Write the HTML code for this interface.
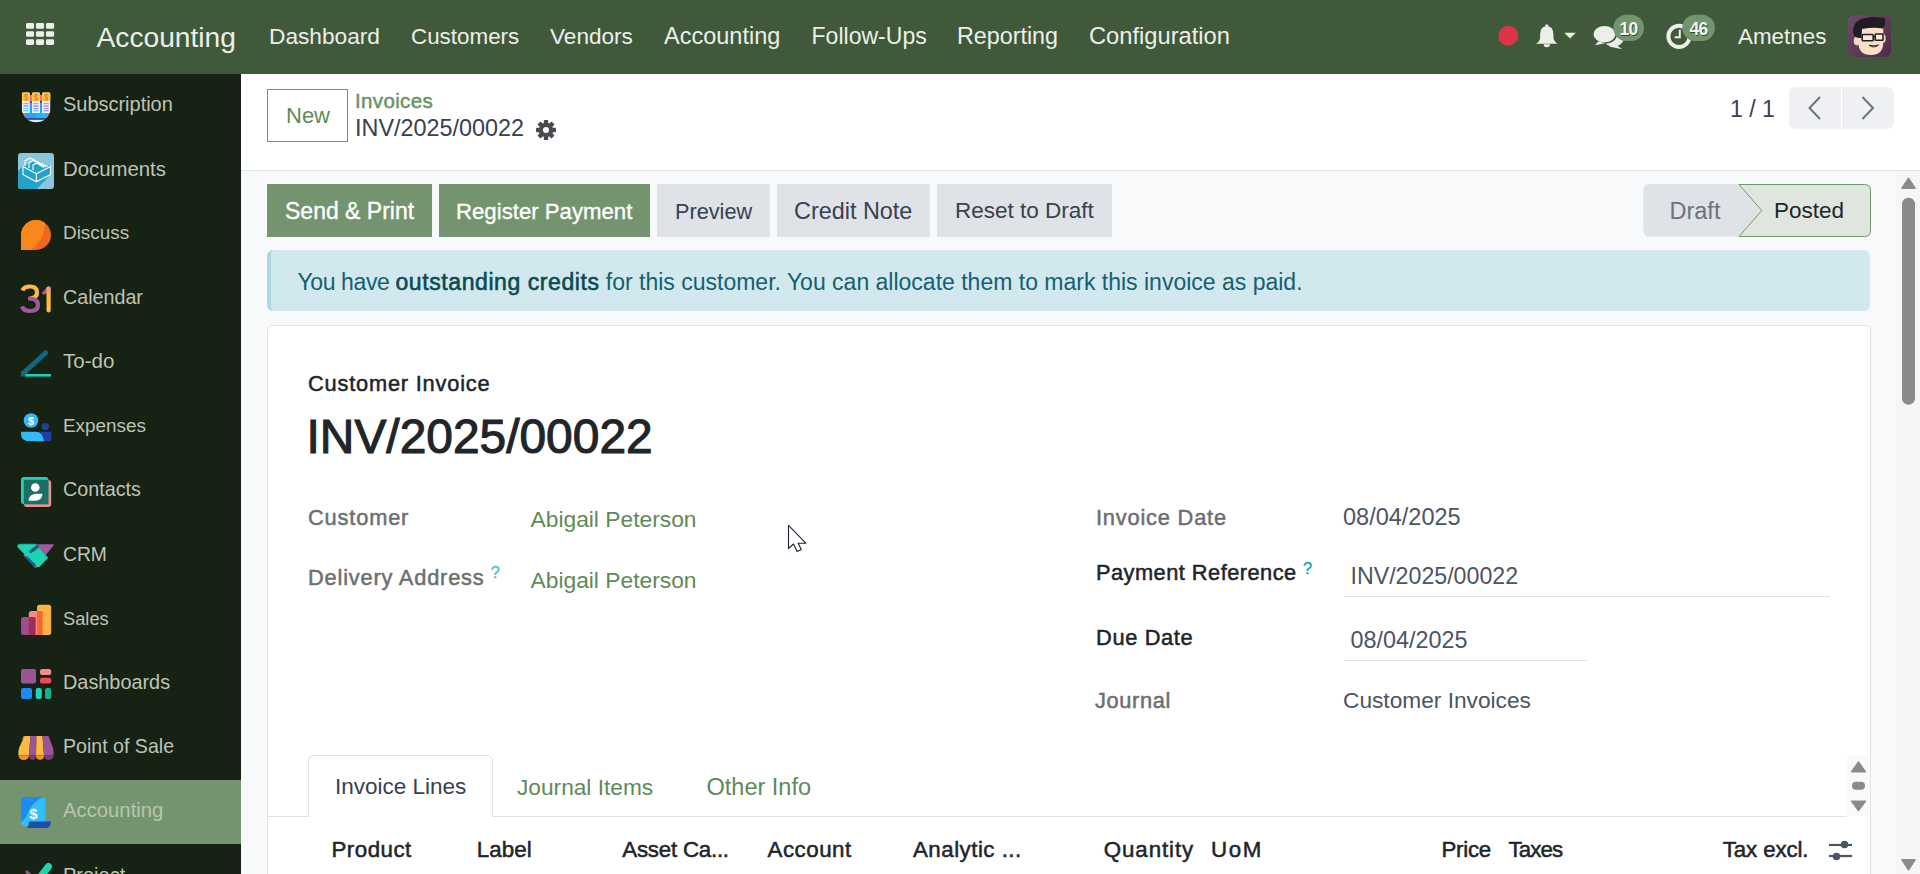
<!DOCTYPE html>
<html><head><meta charset="utf-8">
<style>
*{box-sizing:border-box;margin:0;padding:0}
html,body{width:1920px;height:874px;overflow:hidden;background:#f8f9fa;font-family:"Liberation Sans",sans-serif}
.a{position:absolute;white-space:nowrap;line-height:1}
.sb{-webkit-text-stroke:0.5px currentColor}
#nav{position:absolute;left:0;top:0;width:1920px;height:74px;background:#41593b}
#nav .t{color:#ecefe9;font-size:23px;top:25px}
#side{position:absolute;left:0;top:74px;width:241px;height:800px;background:#162214;overflow:hidden}
.si{position:absolute;left:0;width:241px;height:64px}
.st{position:absolute;left:63px;color:#bfc3b4;font-size:20px;line-height:1;white-space:nowrap}
.si svg{position:absolute}
#cp{position:absolute;left:241px;top:74px;width:1679px;height:97px;background:#fff;border-bottom:1px solid #dee2e6}
.btn{position:absolute;top:184px;height:53px;background:#dfe2e6}
.btn.p{background:#73946e}
.btn .t{position:absolute;top:16px;font-size:23px;line-height:1;color:#374151;white-space:nowrap}
.btn.p .t{color:#fff;-webkit-text-stroke:0.35px #fff}
</style></head>
<body>
<div id="nav">
  <svg class="a" style="left:0;top:0" width="60" height="60" viewBox="0 0 60 60"><g fill="#ecefe9"><rect x="26" y="23.10" width="8.1" height="5.7" rx="1.3"/><rect x="36" y="23.10" width="8.1" height="5.7" rx="1.3"/><rect x="46" y="23.10" width="8.1" height="5.7" rx="1.3"/><rect x="26" y="31.15" width="8.1" height="5.7" rx="1.3"/><rect x="36" y="31.15" width="8.1" height="5.7" rx="1.3"/><rect x="46" y="31.15" width="8.1" height="5.7" rx="1.3"/><rect x="26" y="39.20" width="8.1" height="5.7" rx="1.3"/><rect x="36" y="39.20" width="8.1" height="5.7" rx="1.3"/><rect x="46" y="39.20" width="8.1" height="5.7" rx="1.3"/></g></svg>
  <div class="a t" style="left:96.5px;top:23px;font-size:28.2px">Accounting</div>
  <div class="a t" style="left:269px;font-size:22.7px;top:25.4px">Dashboard</div>
  <div class="a t" style="left:411px;font-size:22.4px;top:25.5px">Customers</div>
  <div class="a t" style="left:550px;font-size:22.6px;top:25.8px">Vendors</div>
  <div class="a t" style="left:664px;font-size:23.5px;top:24.71px">Accounting</div>
  <div class="a t" style="left:811.5px;font-size:23.05px;top:25.1px">Follow-Ups</div>
  <div class="a t" style="left:957px;font-size:23.3px;top:24.9px">Reporting</div>
  <div class="a t" style="left:1089px;font-size:23.7px;top:24.6px">Configuration</div>
  <div class="a t" style="left:1738px;font-size:22.4px;top:25.7px">Ametnes</div>
</div>
<div id="side">
<div style="position:absolute;left:0;top:706px;width:241px;height:64px;background:#74946f"></div>
<div class="st" style="top:21.10px;font-size:19.97px">Subscription</div>
<div class="st" style="top:84.92px;font-size:20.35px">Documents</div>
<div class="st" style="top:150.30px;font-size:18.9px">Discuss</div>
<div class="st" style="top:213.77px;font-size:19.7px">Calendar</div>
<div class="st" style="top:277.25px;font-size:20.5px">To-do</div>
<div class="st" style="top:342.75px;font-size:18.9px">Expenses</div>
<div class="st" style="top:406.17px;font-size:19.76px">Contacts</div>
<div class="st" style="top:470.71px;font-size:19.3px">CRM</div>
<div class="st" style="top:535.71px;font-size:18.3px">Sales</div>
<div class="st" style="top:598.52px;font-size:19.88px">Dashboards</div>
<div class="st" style="top:662.92px;font-size:19.59px">Point of Sale</div>
<div class="st" style="top:726.47px;font-size:20.3px;color:#b5c6b0">Accounting</div>
<div class="st" style="top:790.87px;font-size:20px">Project</div>
<svg style="position:absolute;left:0;top:-74px" width="241" height="874" viewBox="0 0 241 874">
<defs>
 <clipPath id="shield"><path d="M21.5,92 H50.8 V107.5 A14.65,14.8 0 0 1 21.5,107.5 Z"/></clipPath>
 <clipPath id="disc"><path d="M21,250 V235 A15,15 0 1 1 36,250 Z"/></clipPath>
 <clipPath id="doc"><rect x="18" y="153" width="36" height="36" rx="3"/></clipPath>
</defs>
<!-- Subscription -->
<g clip-path="url(#shield)">
 <rect x="29.9" y="95" width="2" height="6" fill="#f36aa7"/><rect x="40" y="95" width="2" height="6" fill="#f36aa7"/>
 <rect x="29.9" y="101" width="2" height="2" fill="#5b3d8c"/><rect x="40" y="101" width="2" height="2" fill="#5b3d8c"/>
 <rect x="29.9" y="103" width="2" height="10" fill="#24a6f5"/><rect x="40" y="103" width="2" height="10" fill="#24a6f5"/>
 <rect x="20" y="113" width="32" height="5.2" fill="#e46aa8"/>
 <rect x="25.5" y="113" width="21" height="5.2" fill="#22a8f8"/>
 <rect x="36" y="113" width="10.5" height="5.2" fill="#12c0fb"/>
 <rect x="20" y="118.2" width="32" height="1.6" fill="#5b3a8e"/>
 <rect x="20" y="119.8" width="32" height="3" fill="#c6f3fc"/>
 <path d="M21.9,113 V94 Q21.9,92.6 23.3,92.6 H28.5 Q29.9,92.6 29.9,94 V113 Z" fill="#edf2f8"/>
 <path d="M31.9,113 V94 Q31.9,92.6 33.3,92.6 H38.6 Q40,92.6 40,94 V113 Z" fill="#edf2f8"/>
 <path d="M42,113 V94 Q42,92.6 43.4,92.6 H48.9 Q50.3,92.6 50.3,94 V113 Z" fill="#edf2f8"/>
 <path d="M21.9,101 V94 Q21.9,92.6 23.3,92.6 H28.5 Q29.9,92.6 29.9,94 V101 Z" fill="#fcc43a"/>
 <path d="M31.9,101 V94 Q31.9,92.6 33.3,92.6 H38.6 Q40,92.6 40,94 V101 Z" fill="#fcc43a"/>
 <path d="M42,101 V94 Q42,92.6 43.4,92.6 H48.9 Q50.3,92.6 50.3,94 V101 Z" fill="#fcc43a"/>
 <g fill="#b18ce9"><rect x="23.3" y="103.1" width="5.2" height="1.1"/><rect x="33.3" y="103.1" width="5.2" height="1.1"/><rect x="43.5" y="103.1" width="5.2" height="1.1"/>
 <rect x="23.3" y="105.3" width="5.2" height="1.5"/><rect x="33.3" y="105.3" width="5.2" height="1.5"/><rect x="43.5" y="105.3" width="5.2" height="1.5"/>
 <rect x="33.3" y="108" width="5.2" height="1.1"/><rect x="43.5" y="108" width="5.2" height="1.1"/><rect x="43.5" y="110" width="5.2" height="1.3"/></g>
 <g fill="#5fd3f5"><rect x="23.3" y="108" width="5.2" height="1.1"/><rect x="23.3" y="110" width="5.2" height="1.3"/><rect x="33.3" y="110" width="5.2" height="1.3"/></g>
 <g fill="none" stroke="#f7702b" stroke-width="1.3"><path d="M27.5,94.8 Q24.3,94.5 25,96.6 Q27.8,97.5 27,99.4 Q25.8,100.2 24.3,99.5"/><path d="M37.5,94.8 Q34.3,94.5 35,96.6 Q37.8,97.5 37,99.4 Q35.8,100.2 34.3,99.5"/><path d="M47.7,94.8 Q44.5,94.5 45.2,96.6 Q48,97.5 47.2,99.4 Q46,100.2 44.5,99.5"/></g>
</g>
<!-- Documents -->
<g clip-path="url(#doc)">
 <rect x="18" y="153" width="36" height="36" fill="#8cc5dc"/>
 <path d="M18,171 L23,166 L50,175 L37,189 L18,189 Z" fill="#22a4c8"/>
 <path d="M23,166.5 L31,162 L36,160 L50.5,166.5 L50.5,174.5 L36.4,181.8 L23,174.5 Z" fill="#22a4c8"/>
 <g fill="none" stroke="#fff" stroke-width="1.1" stroke-linejoin="round">
  <path d="M23,166.5 L36.4,173.8 L50.5,166.5 L50.5,174.5 L36.4,181.8 L23,174.5 Z"/>
  <path d="M36.4,173.8 V181.8"/>
  <path d="M25,166 V161 L30,158 L48,166.5 M29,168 V163 L33,160.5 L46,167 M33,170 V165 L36.5,163 L44,167.5"/>
 </g>
</g>
<!-- Discuss -->
<g clip-path="url(#disc)">
 <rect x="20" y="219" width="32" height="32" fill="#f26522"/>
 <circle cx="12.2" cy="222.9" r="32.8" fill="#f8881b"/>
</g>
<!-- Calendar 31 -->
<g fill="none" stroke-width="4.2" stroke-linecap="butt">
 <path d="M22.5,290.5 Q24,286.5 30,286.5 Q37,286.5 37,292.5 Q37,298 30,298.5" stroke="#fbb945"/>
 <path d="M28,298.5 Q38,298.5 38,305 Q38,311 30,311 Q23.5,311 22,306.5" stroke="#9c5a9c"/>
</g>
<path d="M41.5,293 L47,287 L50,287 L50,291 L44,295 Z" fill="#9c5a9c"/>
<rect x="46.5" y="286.5" width="4.2" height="26" rx="2" fill="#fbb945"/>
<rect x="46.5" y="286.5" width="4.2" height="5" rx="2" fill="#f58aa0"/>
<!-- To-do -->
<path d="M23.5,373 L45.5,353" stroke="#0f6a80" stroke-width="5" stroke-linecap="round"/>
<path d="M21,371 L24,371 L27,374 L27,376.5 L21,376.5 Z" fill="#0f6a80"/>
<rect x="25.5" y="374" width="25.5" height="2.6" fill="#1ad0b5"/>
<!-- Expenses -->
<circle cx="31" cy="420.5" r="7.3" fill="#35b8f6"/>
<text x="31" y="424.8" font-family="Liberation Sans" font-weight="bold" font-size="11" fill="#fff" text-anchor="middle">$</text>
<circle cx="45.4" cy="426.6" r="3.7" fill="#1e40a0"/>
<rect x="36" y="431.8" width="15.5" height="9.4" rx="2" fill="#1e40a0"/>
<path d="M21,431.8 H36 Q42.5,432 44,441.2 H29 Q21,441.2 21,434 Z" fill="#33bbf8"/>
<!-- Contacts -->
<rect x="23.8" y="480" width="27.4" height="27" rx="3" fill="#f78c8c"/>
<rect x="21" y="477" width="27.5" height="27.3" rx="3" fill="#1bd1b8"/>
<rect x="23.8" y="479.8" width="24.7" height="24.5" fill="#1e6e63"/>
<circle cx="35.3" cy="487.5" r="4.3" fill="#fff"/>
<path d="M28.5,500.8 Q29,493.8 37,493.8 H42.5 Q42,500.8 35,500.8 Z" fill="#fff"/>
<!-- CRM -->
<path d="M35.7,544.2 H53 Q54.5,544.2 53.6,545.5 L45.8,555 Z" fill="#9d5b9e"/>
<path d="M23.5,555.5 L34.5,567.2 Q35.5,568.3 36.8,567.4 L38.5,565.5 L25,552 Z" fill="#9d5b9e"/>
<path d="M19.5,544.2 H35.7 L47.9,557.8 L39.5,566.5 Q38.3,567.6 37.2,566.5 L18.5,548 Q17.3,546.5 17.8,545.3 Q18.3,544.2 19.5,544.2 Z" fill="#1ed2b5" stroke="#1ed2b5" stroke-width="0.6" stroke-linejoin="round"/>
<path d="M30.9,551.5 L37.4,546.6" stroke="#10637a" stroke-width="3.3" stroke-linecap="round"/>
<path d="M26.6,557.6 L34.6,565.2" stroke="#10637a" stroke-width="2.6" stroke-linecap="round"/>
<!-- Sales -->
<rect x="37" y="604.8" width="14.2" height="30.2" rx="2.5" fill="#fbb345"/>
<rect x="28.8" y="611" width="13.8" height="24" rx="2.5" fill="#f88a8c"/>
<rect x="37" y="611" width="5.6" height="24" fill="#f36a2a"/>
<rect x="21" y="617" width="14.5" height="18" rx="2.5" fill="#9b4f8c"/>
<rect x="28.8" y="617" width="6.7" height="18" fill="#a02c5a"/>
<!-- Dashboards -->
<rect x="21" y="669" width="15" height="14.6" rx="2" fill="#9b5596"/>
<rect x="40" y="669" width="11.2" height="6" rx="2" fill="#f78b8b"/>
<rect x="40" y="677.8" width="11.2" height="5.8" rx="2" fill="#f04a57"/>
<rect x="21" y="688" width="11" height="11" rx="2" fill="#1a8cf3"/>
<rect x="35.7" y="688" width="6.1" height="11" rx="2" fill="#1ed3b4"/>
<rect x="45" y="688" width="6.2" height="11" rx="2" fill="#17b08f"/>
<!-- Point of Sale -->
<g>
 <path d="M24.5,736 H30.5 L29,755.5 H18.5 Q18,752 19,748 Z" fill="#fbb945"/>
 <path d="M30.5,736 H36.5 L36,755.5 H29 Z" fill="#9b5596"/>
 <path d="M36.5,736 H42.5 L44,755.5 H36 Z" fill="#fbb945"/>
 <path d="M42.5,736 H48.5 L53,748 Q54,752 53.5,755.5 H44 Z" fill="#9b5596"/>
 <path d="M24.5,736 Q23,736 22,740 L24,737 Z" fill="#fbb945"/>
 <path d="M18.5,755.5 H29 A5.25,4.5 0 0 1 18.5,755.5 Z" fill="#f7901e"/>
 <path d="M29,755.5 H36 A3.5,4.2 0 0 1 29,755.5 Z" fill="#7b3c78"/>
 <path d="M36,755.5 H44 A4,4.2 0 0 1 36,755.5 Z" fill="#f7901e"/>
 <path d="M44,755.5 H53.5 A4.75,4.5 0 0 1 44,755.5 Z" fill="#7b3c78"/>
</g>
<!-- Accounting -->
<rect x="21" y="797" width="24.5" height="29" rx="3" fill="#2fbffa"/>
<path d="M21,822 V800 Q21,797 24,797 H44 Q33,800 27,815 Q25,820 21,822 Z" fill="#1a8df0"/>
<path d="M29,821.5 H51 Q51,828 46,828 H27 Q29,826 29,821.5 Z" fill="#1f4cac"/>
<text x="33.5" y="819" font-family="Liberation Sans" font-weight="bold" font-size="15" fill="#fff" text-anchor="middle">$</text>
<!-- Project -->
<path d="M39.5,878 L48.5,866.5" stroke="#1ed3b4" stroke-width="7" stroke-linecap="round"/>
<path d="M26,871 L30,875" stroke="#9b5596" stroke-width="3"/>
</svg>
</div>
<div id="cp"></div>
<div class="btn p" style="left:267px;width:165px"><div class="t" style="left:18px">Send &amp; Print</div></div>
<div class="btn p" style="left:439px;width:211px"><div class="t" style="left:17px;font-size:22.2px;top:16.6px">Register Payment</div></div>
<div class="btn" style="left:657px;width:113px"><div class="t" style="left:18px;font-size:21.7px;top:17px">Preview</div></div>
<div class="btn" style="left:777px;width:153px"><div class="t" style="left:17px;font-size:23.4px;top:15.7px">Credit Note</div></div>
<div class="btn" style="left:937px;width:175px"><div class="t" style="left:18px;font-size:22.5px;top:16.4px">Reset to Draft</div></div>

<!-- nav right -->
<svg class="a" style="left:1490px;top:10px" width="420" height="54" viewBox="1490 10 420 54">
 <circle cx="1508.3" cy="35.8" r="10" fill="#dc3545"/>
 <!-- bell -->
 <path d="M1546.8,26.3 C1541.5,26.3 1540.3,30 1540.2,35 L1540,39 Q1539,42.3 1536,43.8 L1557.6,43.8 Q1554.6,42.3 1553.6,39 L1553.4,35 C1553.3,30 1552.1,26.3 1546.8,26.3 Z" fill="#ecefe9"/>
 <circle cx="1546.8" cy="25.8" r="1.6" fill="#ecefe9"/>
 <path d="M1543.6,44.3 A3.2,3 0 0 0 1550,44.3 Z" fill="#ecefe9"/>
 <path d="M1564.3,32.8 H1575.8 L1570,38.5 Z" fill="#ecefe9"/>
 <!-- chat -->
 <ellipse cx="1613.5" cy="39" rx="10" ry="7.6" fill="#ecefe9"/>
 <path d="M1615,44 L1622.3,49.3 L1609,46.5 Z" fill="#ecefe9"/>
 <ellipse cx="1604.5" cy="34.2" rx="11.8" ry="9" fill="#ecefe9" stroke="#41593b" stroke-width="1.6"/>
 <path d="M1598.5,41.2 L1595,45.3 L1605,43.2 Z" fill="#ecefe9"/>
 <rect x="1613.4" y="14.7" width="30.6" height="26.3" rx="13.1" fill="#73946e"/>
 <text x="1629.3" y="35.8" font-family="Liberation Sans" font-weight="bold" font-size="17.5" fill="#2e4a2b" text-anchor="middle" letter-spacing="-0.6">10</text>
 <text x="1628.6" y="35" font-family="Liberation Sans" font-weight="bold" font-size="17.5" fill="#f2f4f0" text-anchor="middle" letter-spacing="-0.6">10</text>
 <!-- clock -->
 <circle cx="1679" cy="36.3" r="10.6" fill="none" stroke="#ecefe9" stroke-width="4"/>
 <path d="M1679.8,29.7 V37.3 H1674.7" fill="none" stroke="#ecefe9" stroke-width="2"/>
 <rect x="1682.3" y="14.7" width="32.6" height="26.3" rx="13.1" fill="#73946e"/>
 <text x="1699.3" y="35.8" font-family="Liberation Sans" font-weight="bold" font-size="17.5" fill="#2e4a2b" text-anchor="middle" letter-spacing="-0.6">46</text>
 <text x="1698.6" y="35" font-family="Liberation Sans" font-weight="bold" font-size="17.5" fill="#f2f4f0" text-anchor="middle" letter-spacing="-0.6">46</text>
</svg>
<div class="a" style="left:1848.3px;top:15px;width:42.6px;height:41.8px;border-radius:6px;background:linear-gradient(135deg,#6e4a6c,#4f2b46);overflow:hidden">
 <svg width="43" height="42" viewBox="0 0 43 42">
  <ellipse cx="8.8" cy="26" rx="3" ry="4.4" fill="#f5d6bd"/>
  <ellipse cx="35.5" cy="23.4" rx="2.2" ry="4.2" fill="#f2d2b8"/>
  <path d="M10.5,14 Q10.5,11 14,11 H32 Q35.3,11 35.3,16 V27 Q35.3,40 23,40 Q10.5,40 10.5,28 Z" fill="#f8dfc7"/>
  <path d="M5,17 Q5,5 17,3 Q27,1 33,3 Q37,1 37,5 Q38,10 34.5,13.5 Q26,12 14,14 L13.5,23 Q8,23 6.5,21 Z" fill="#1f1d22"/>
  <rect x="14.2" y="19.5" width="11" height="6.3" rx="0.8" fill="#fff" fill-opacity="0.35" stroke="#222" stroke-width="1.6"/>
  <rect x="27.2" y="19" width="7.8" height="6.3" rx="0.8" fill="#fff" fill-opacity="0.35" stroke="#222" stroke-width="1.6"/>
  <path d="M25.2,22 H27.2" stroke="#222" stroke-width="1.4"/>
  <path d="M21,30.2 Q26,33.8 30.5,30 Q26,31.5 21,30.2 Z" fill="#fff" stroke="#3a2a2a" stroke-width="1"/>
 </svg>
</div>
<!-- control panel content -->
<div class="a" style="left:267px;top:89px;width:81px;height:53px;border:1px solid #71946c;background:#fff"></div>
<div class="a" style="left:286px;top:105.4px;font-size:22px;color:#5f8a58">New</div>
<div class="a sb" style="left:355px;top:91.35px;font-size:20.5px;letter-spacing:0.36px;color:#6b9365">Invoices</div>
<div class="a" style="left:355px;top:117.2px;font-size:23.4px;color:#374151">INV/2025/00022</div>
<svg class="a" style="left:535px;top:119px" width="22" height="22" viewBox="-11 -11 22 22">
 <g fill="#464b52">
  <circle r="7.2"/>
  <g id="teeth"><rect x="-2.2" y="-10" width="4.4" height="5" rx="0.8"/></g>
  <use href="#teeth" transform="rotate(45)"/><use href="#teeth" transform="rotate(90)"/><use href="#teeth" transform="rotate(135)"/>
  <use href="#teeth" transform="rotate(180)"/><use href="#teeth" transform="rotate(225)"/><use href="#teeth" transform="rotate(270)"/><use href="#teeth" transform="rotate(315)"/>
 </g>
 <circle r="3" fill="#fff"/>
</svg>
<div class="a" style="left:1730px;top:97.9px;font-size:23px;color:#374151">1 / 1</div>
<div class="a" style="left:1789px;top:87px;width:52px;height:42px;background:#eef0f3;border-radius:7px 0 0 7px"></div>
<div class="a" style="left:1842px;top:87px;width:52px;height:42px;background:#eef0f3;border-radius:0 7px 7px 0"></div>
<svg class="a" style="left:1789px;top:87px" width="105" height="42" viewBox="0 0 105 42">
 <path d="M31,10 L20.5,21 L31,32" fill="none" stroke="#6b7280" stroke-width="2"/>
 <path d="M73.5,10 L84,21 L73.5,32" fill="none" stroke="#6b7280" stroke-width="2"/>
</svg>
<!-- statusbar -->
<svg class="a" style="left:1640px;top:180px" width="236" height="62" viewBox="1640 180 236 62">
 <path d="M1649.5,184 H1739 L1761.8,210.3 L1739,236.5 H1649.5 Q1643.5,236.5 1643.5,230.5 V190 Q1643.5,184 1649.5,184 Z" fill="#dfe2e6"/>
 <path d="M1739,184.5 H1864.5 Q1870.5,184.5 1870.5,190.5 V230.5 Q1870.5,236.5 1864.5,236.5 H1739 L1761.8,210.5 Z" fill="#dfe6de" stroke="#6f9a68" stroke-width="1"/>
</svg>
<div class="a" style="left:1669.5px;top:199.5px;font-size:23.5px;color:#6b7280">Draft</div>
<div class="a" style="left:1774px;top:199.5px;font-size:22.5px;color:#212529">Posted</div>
<!-- alert -->
<div class="a" style="left:267px;top:250px;width:1603px;height:61px;background:#d1e9ee;border-radius:6px;border-left:4px solid #a9d7e2"></div>
<div class="a" style="left:297.5px;top:270.8px;font-size:23px;letter-spacing:-0.4px;color:#146070">You have</div>
<div class="a" style="left:395.5px;top:270.8px;font-size:23px;color:#0c4a55;-webkit-text-stroke:0.6px #0c4a55;letter-spacing:0.58px">outstanding credits</div>
<div class="a" style="left:605.8px;top:270.8px;font-size:23px;color:#146070">for this customer. You can allocate them to mark this invoice as paid.</div>
<!-- sheet -->
<div class="a" style="left:267px;top:325px;width:1604px;height:560px;background:#fff;border:1px solid #e1e4e8;border-radius:5px"></div>
<div class="a sb" style="left:308px;top:372.55px;font-size:21.8px;letter-spacing:0.8px;color:#212529">Customer Invoice</div>
<div class="a" style="left:306.5px;top:412.9px;font-size:47.9px;color:#212529;-webkit-text-stroke:1.1px #212529">INV/2025/00022</div>
<div class="a sb" style="left:308px;top:506.75px;font-size:21.8px;letter-spacing:0.84px;color:#6c6f73">Customer</div>
<div class="a" style="left:530.5px;top:507.5px;font-size:22.8px;color:#5f8a58">Abigail Peterson</div>
<div class="a sb" style="left:308px;top:567.15px;font-size:21.8px;letter-spacing:0.81px;color:#6c6f73">Delivery Address</div>
<div class="a" style="left:490.8px;top:564.3px;font-size:16.5px;-webkit-text-stroke:0.3px #52b9d0;color:#52b9d0">?</div>
<div class="a" style="left:530.5px;top:568.7px;font-size:22.8px;color:#5f8a58">Abigail Peterson</div>
<div class="a sb" style="left:1096px;top:506.65px;font-size:21.8px;letter-spacing:0.81px;color:#6c6f73">Invoice Date</div>
<div class="a" style="left:1343px;top:506px;font-size:23.5px;color:#4b5563">08/04/2025</div>
<div class="a sb" style="left:1096px;top:562.15px;font-size:21.8px;letter-spacing:0.47px;color:#212529">Payment Reference</div>
<div class="a" style="left:1303px;top:559.8px;font-size:16.5px;-webkit-text-stroke:0.3px #17a2b8;color:#17a2b8">?</div>
<div class="a" style="left:1350.5px;top:564.8px;font-size:23.2px;color:#4b5563">INV/2025/00022</div>
<div class="a" style="left:1344px;top:596px;width:486px;height:1px;background:#dee2e6"></div>
<div class="a sb" style="left:1096px;top:626.65px;font-size:21.8px;letter-spacing:0.65px;color:#212529">Due Date</div>
<div class="a" style="left:1350.5px;top:629px;font-size:23.4px;color:#4b5563">08/04/2025</div>
<div class="a" style="left:1344px;top:660px;width:243px;height:1px;background:#dee2e6"></div>
<div class="a sb" style="left:1095px;top:689.85px;font-size:21.8px;letter-spacing:0.64px;color:#6c6f73">Journal</div>
<div class="a" style="left:1343px;top:689.1px;font-size:22.7px;color:#4b5563">Customer Invoices</div>
<!-- tabs -->
<div class="a" style="left:267px;top:816px;width:1580px;height:1px;background:#dee2e6"></div>
<div class="a" style="left:308px;top:755px;width:185px;height:62px;background:#fff;border:1px solid #dee2e6;border-bottom:none;border-radius:6px 6px 0 0"></div>
<div class="a" style="left:335px;top:776.4px;font-size:22.5px;color:#374151">Invoice Lines</div>
<div class="a" style="left:517px;top:776.4px;font-size:22.7px;color:#5f8a58">Journal Items</div>
<div class="a" style="left:706.5px;top:776.4px;font-size:23.5px;color:#5f8a58">Other Info</div>
<!-- tab scroller -->
<div class="a" style="left:1847px;top:755px;width:23px;height:61px;background:#f8f9fa"></div>
<svg class="a" style="left:1847px;top:755px" width="23" height="61" viewBox="1847 755 23 61">
 <path d="M1858.5,761.5 L1866,772 H1851 Z" fill="#8a8a8a" stroke="#8a8a8a" stroke-width="1" stroke-linejoin="round"/>
 <rect x="1852" y="781.7" width="13" height="8" rx="4" fill="#8a8a8a"/>
 <path d="M1858.5,811 L1866,801 H1851 Z" fill="#8a8a8a" stroke="#8a8a8a" stroke-width="1" stroke-linejoin="round"/>
</svg>
<!-- table header -->
<div class="a sb" style="left:331.5px;top:839.12px;font-size:22.3px;letter-spacing:0.48px;color:#212529">Product</div>
<div class="a sb" style="left:476.7px;top:839.12px;font-size:22.3px;letter-spacing:0.13px;color:#212529">Label</div>
<div class="a sb" style="left:622.3px;top:839.12px;font-size:22.3px;letter-spacing:-0.23px;color:#212529">Asset Ca...</div>
<div class="a sb" style="left:767.5px;top:839.12px;font-size:22.3px;letter-spacing:0.52px;color:#212529">Account</div>
<div class="a sb" style="left:913px;top:839.12px;font-size:22.3px;letter-spacing:0.49px;color:#212529">Analytic ...</div>
<div class="a sb" style="left:1103.8px;top:839.12px;font-size:22.3px;letter-spacing:0.9px;color:#212529">Quantity</div>
<div class="a sb" style="left:1211px;top:839.12px;font-size:22.3px;letter-spacing:1.65px;color:#212529">UoM</div>
<div class="a sb" style="left:1441.5px;top:839.12px;font-size:22.3px;letter-spacing:-0.27px;color:#212529">Price</div>
<div class="a sb" style="left:1508.5px;top:839.12px;font-size:22.3px;letter-spacing:-0.87px;color:#212529">Taxes</div>
<div class="a sb" style="left:1722.8px;top:839.12px;font-size:22.3px;letter-spacing:-0.13px;color:#212529">Tax excl.</div>
<svg class="a" style="left:1826px;top:838px" width="30" height="26" viewBox="1826 838 30 26">
 <g stroke="#4b5563" stroke-width="2.2"><path d="M1829,845 H1852"/><path d="M1829,856 H1852"/></g>
 <circle cx="1844.5" cy="844.5" r="3.8" fill="#4b5563"/>
 <circle cx="1836.5" cy="856.5" r="3.8" fill="#4b5563"/>
</svg>
<!-- main scrollbar -->
<div class="a" style="left:1896px;top:171px;width:24px;height:703px;background:#f5f6f8"></div>
<svg class="a" style="left:1896px;top:171px" width="24" height="703" viewBox="1896 171 24 703">
 <path d="M1908.5,177.7 L1915.5,188.4 H1901.5 Z" fill="#8a8a8a" stroke="#8a8a8a" stroke-linejoin="round"/>
 <rect x="1902" y="197.7" width="13" height="207" rx="6.5" fill="#8a8a8a"/>
 <path d="M1908.5,870.4 L1915.5,859.6 H1901.5 Z" fill="#8a8a8a" stroke="#8a8a8a" stroke-linejoin="round"/>
</svg>
<!-- cursor -->
<svg class="a" style="left:786px;top:523px" width="24" height="32" viewBox="0 0 24 32">
 <path d="M2.5,2.3 L2.5,25.5 L7.5,21 L11.1,28.6 L15.3,26.6 L12.2,20.2 L19.8,20.2 Z" fill="#fff" stroke="#1e2230" stroke-width="1.1" stroke-linejoin="round"/>
</svg>
</body></html>
